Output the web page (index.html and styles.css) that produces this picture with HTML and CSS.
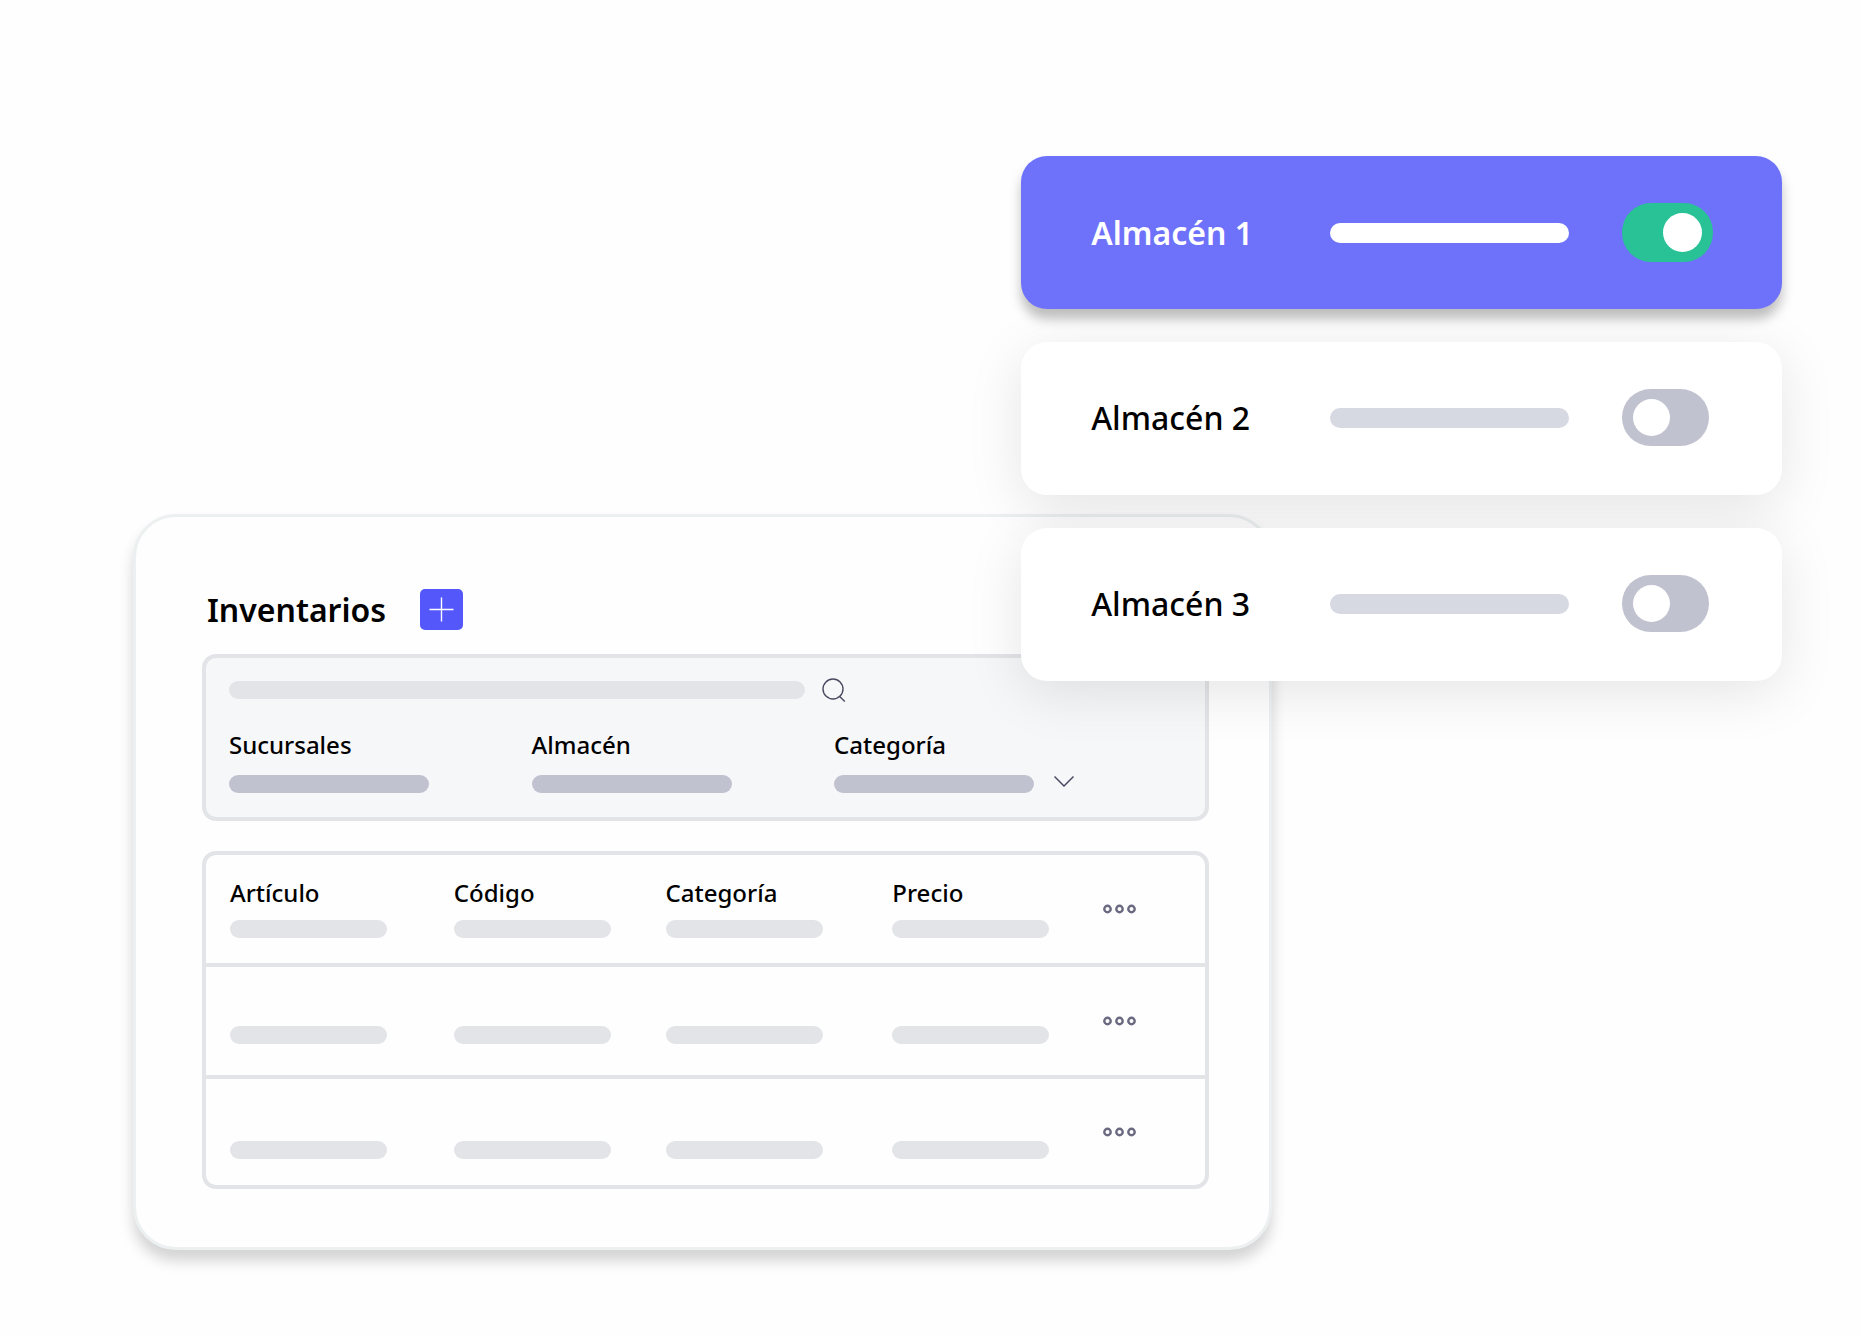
FILE: index.html
```html
<!DOCTYPE html>
<html lang="es">
<head>
    <meta charset="UTF-8">
    <meta name="viewport" content="width=device-width, initial-scale=1.0">
    <title>Inventarios</title>
    <link rel="stylesheet" href="styles.css">
</head>
<body>
    <main class="page">
        <section class="panel">
            <div class="panel-header">
                <h1>Inventarios</h1>
                <button type="button" class="add-btn" aria-label="Agregar">
                    <svg width="25" height="25" viewBox="0 0 25 25" fill="none" stroke="currentColor" stroke-width="1.4">
                        <path d="M12.5 0.5v24M0.5 12.5h24"/>
                    </svg>
                </button>
            </div>

            <form class="filters">
                <div class="search-row">
                    <input type="search" class="bar search-input" aria-label="Buscar">
                    <button type="button" class="icon-btn" aria-label="Buscar">
                        <svg width="24" height="24" viewBox="0 0 24 24" fill="none" stroke="currentColor" stroke-width="1.4">
                            <circle cx="11" cy="11" r="10"/>
                            <path d="M17.4 18.2l5.4 5.2"/>
                        </svg>
                    </button>
                </div>

                <div class="filter-grid">
                    <div class="filter">
                        <label for="sucursales">Sucursales</label>
                        <select id="sucursales" class="bar filter-select"></select>
                    </div>
                    <div class="filter">
                        <label for="almacen">Almacén</label>
                        <select id="almacen" class="bar filter-select"></select>
                    </div>
                    <div class="filter">
                        <label for="categoria">Categoría</label>
                        <div class="select-row">
                            <select id="categoria" class="bar filter-select"></select>
                            <svg width="20" height="12" viewBox="0 0 20 12" fill="none" stroke="currentColor" stroke-width="1.5">
                                <path d="M0.5 1.5L10 11l9.5-9.5"/>
                            </svg>
                        </div>
                    </div>
                </div>
            </form>

            <table class="items">
                <colgroup>
                    <col class="col-article">
                    <col class="col-code">
                    <col class="col-category">
                    <col class="col-price">
                    <col>
                </colgroup>
                <thead>
                    <tr>
                        <th scope="col">Artículo<span class="bar"></span></th>
                        <th scope="col">Código<span class="bar"></span></th>
                        <th scope="col">Categoría<span class="bar"></span></th>
                        <th scope="col">Precio<span class="bar"></span></th>
                        <td class="actions">
                            <button type="button" class="icon-btn" aria-label="Más opciones">
                                <svg width="33" height="10" viewBox="0 0 33 10" fill="none" stroke="currentColor" stroke-width="2.4">
                                    <circle cx="4.5" cy="5" r="3.2"/><circle cx="16.5" cy="5" r="3.2"/><circle cx="28.5" cy="5" r="3.2"/>
                                </svg>
                            </button>
                        </td>
                    </tr>
                </thead>
                <tbody>
                    <tr>
                        <td><span class="bar"></span></td>
                        <td><span class="bar"></span></td>
                        <td><span class="bar"></span></td>
                        <td><span class="bar"></span></td>
                        <td class="actions">
                            <button type="button" class="icon-btn" aria-label="Más opciones">
                                <svg width="33" height="10" viewBox="0 0 33 10" fill="none" stroke="currentColor" stroke-width="2.4">
                                    <circle cx="4.5" cy="5" r="3.2"/><circle cx="16.5" cy="5" r="3.2"/><circle cx="28.5" cy="5" r="3.2"/>
                                </svg>
                            </button>
                        </td>
                    </tr>
                    <tr>
                        <td><span class="bar"></span></td>
                        <td><span class="bar"></span></td>
                        <td><span class="bar"></span></td>
                        <td><span class="bar"></span></td>
                        <td class="actions">
                            <button type="button" class="icon-btn" aria-label="Más opciones">
                                <svg width="33" height="10" viewBox="0 0 33 10" fill="none" stroke="currentColor" stroke-width="2.4">
                                    <circle cx="4.5" cy="5" r="3.2"/><circle cx="16.5" cy="5" r="3.2"/><circle cx="28.5" cy="5" r="3.2"/>
                                </svg>
                            </button>
                        </td>
                    </tr>
                </tbody>
            </table>
        </section>

        <section class="warehouses">
            <div class="warehouse active">
                <label for="almacen1">Almacén 1</label>
                <span class="line"></span>
                <input type="checkbox" id="almacen1" class="switch" checked>
            </div>
            <div class="warehouse">
                <label for="almacen2">Almacén 2</label>
                <span class="line"></span>
                <input type="checkbox" id="almacen2" class="switch">
            </div>
            <div class="warehouse">
                <label for="almacen3">Almacén 3</label>
                <span class="line"></span>
                <input type="checkbox" id="almacen3" class="switch">
            </div>
        </section>
    </main>
</body>
</html>
```
FILE: styles.css
```css
:root {
    --primary: #6e72fb;
    --accent: #5458fb;
    --green: #29c196;
    --border: #e3e4e8;
    --gray: #c1c2cf;
    --icon: #4b4961;
}

* {
    box-sizing: border-box;
    margin: 0;
    padding: 0;
    font-family: "Noto Sans", "Open Sans", sans-serif;
}

body {
    background: #fefefe;
    color: #000;
    font-size: 24px;
    line-height: 32px;
}

.page {
    position: relative;
    min-height: 100vh;
    padding: 514px 588px 85px 133px;
}

button {
    border: none;
    background: none;
    cursor: pointer;
}

svg {
    display: block;
}

.bar {
    display: block;
    height: 18px;
    border: none;
    border-radius: 9px;
    background: var(--border);
}

/* main panel */
.panel {
    display: flex;
    flex-direction: column;
    padding: 72px 60px 58px 66px;
    background: #fefefe;
    border: 3px solid #ecf0f0;
    border-radius: 43px;
    box-shadow: 0 11px 14px rgba(0, 0, 0, 0.17);
}

.panel-header {
    display: flex;
    align-items: center;
    gap: 34px;
    height: 41px;
    padding-left: 5px;
    margin-bottom: 24px;
}

h1 {
    font-size: 32px;
    font-weight: 600;
}

.add-btn {
    display: grid;
    place-items: center;
    width: 43px;
    height: 41px;
    border-radius: 5px;
    background: var(--accent);
    color: #fff;
}

.icon-btn {
    color: var(--icon);
}

.filters {
    padding: 20px 0 24px 23px;
    margin-bottom: 30px;
    background: #f6f7f9;
    border: 4px solid var(--border);
    border-radius: 14px;
}

.search-row {
    display: flex;
    align-items: center;
    gap: 17px;
    height: 24px;
    margin-bottom: 27px;
}

.search-input {
    width: 59%;
    padding: 0 9px;
    font-size: 14px;
    appearance: none;
}

.filter-grid {
    display: grid;
    grid-template-columns: 31% 31% 1fr;
}

.filter label {
    display: block;
    margin-bottom: 14px;
    font-weight: 500;
}

.filter-select {
    width: 200px;
    background: var(--gray);
    appearance: none;
}

.select-row {
    display: flex;
    align-items: flex-start;
    gap: 20px;
    color: var(--icon);
}

/* items table */
.items {
    width: 100%;
    table-layout: fixed;
    border: 4px solid var(--border);
    border-collapse: separate;
    border-spacing: 0;
    border-radius: 14px;
}

.col-article { width: 22.4%; }
.col-code { width: 21.2%; }
.col-category { width: 22.7%; }
.col-price { width: 21.1%; }

.items th,
.items td {
    height: 112px;
    padding: 0 0 31px 24px;
    border-bottom: 4px solid var(--border);
    text-align: left;
    vertical-align: bottom;
    font-weight: 500;
}

.items th {
    padding-bottom: 25px;
}

.items tbody tr:last-child td {
    height: 106px;
    padding-bottom: 26px;
    border-bottom: none;
}

.items .bar {
    width: 157px;
}

.items th .bar {
    margin-top: 11px;
}

.items .actions,
.items tbody tr:last-child .actions {
    padding-bottom: 0;
    vertical-align: middle;
}

.actions .icon-btn {
    display: block;
    color: #6b6980;
}

/* floating warehouse cards */
.warehouses {
    position: absolute;
    top: 156px;
    right: 78px;
    left: 54.9%;
    display: flex;
    flex-direction: column;
    gap: 33px;
}

.warehouse {
    display: grid;
    grid-template-columns: 239px 1fr 91px;
    align-items: center;
    height: 153px;
    padding: 0 69px 2px 70px;
    background: #fff;
    border-radius: 26px;
    box-shadow: 0 12px 56px rgba(0, 0, 0, 0.1);
    font-size: 32px;
    font-weight: 500;
}

.warehouse.active {
    z-index: 1;
    padding-bottom: 0;
    background: var(--primary);
    color: #fff;
    font-weight: 600;
    box-shadow: 0 10px 12px rgba(0, 0, 0, 0.25);
}

.line {
    height: 20px;
    margin-right: 53px;
    border-radius: 10px;
    background: #d6d9e2;
}

.active .line {
    background: #fff;
}

.switch {
    display: flex;
    align-items: center;
    width: 87px;
    height: 57px;
    padding: 0 11px;
    border-radius: 29px;
    background: var(--gray);
    appearance: none;
    cursor: pointer;
}

.switch::before {
    content: "";
    width: 37px;
    height: 37px;
    border-radius: 50%;
    background: #fff;
}

.switch:checked {
    justify-content: flex-end;
    width: 91px;
    height: 59px;
    background: var(--green);
}

.switch:checked::before {
    width: 39px;
    height: 39px;
}

.warehouse:not(.active) {
    position: relative;
}
```
